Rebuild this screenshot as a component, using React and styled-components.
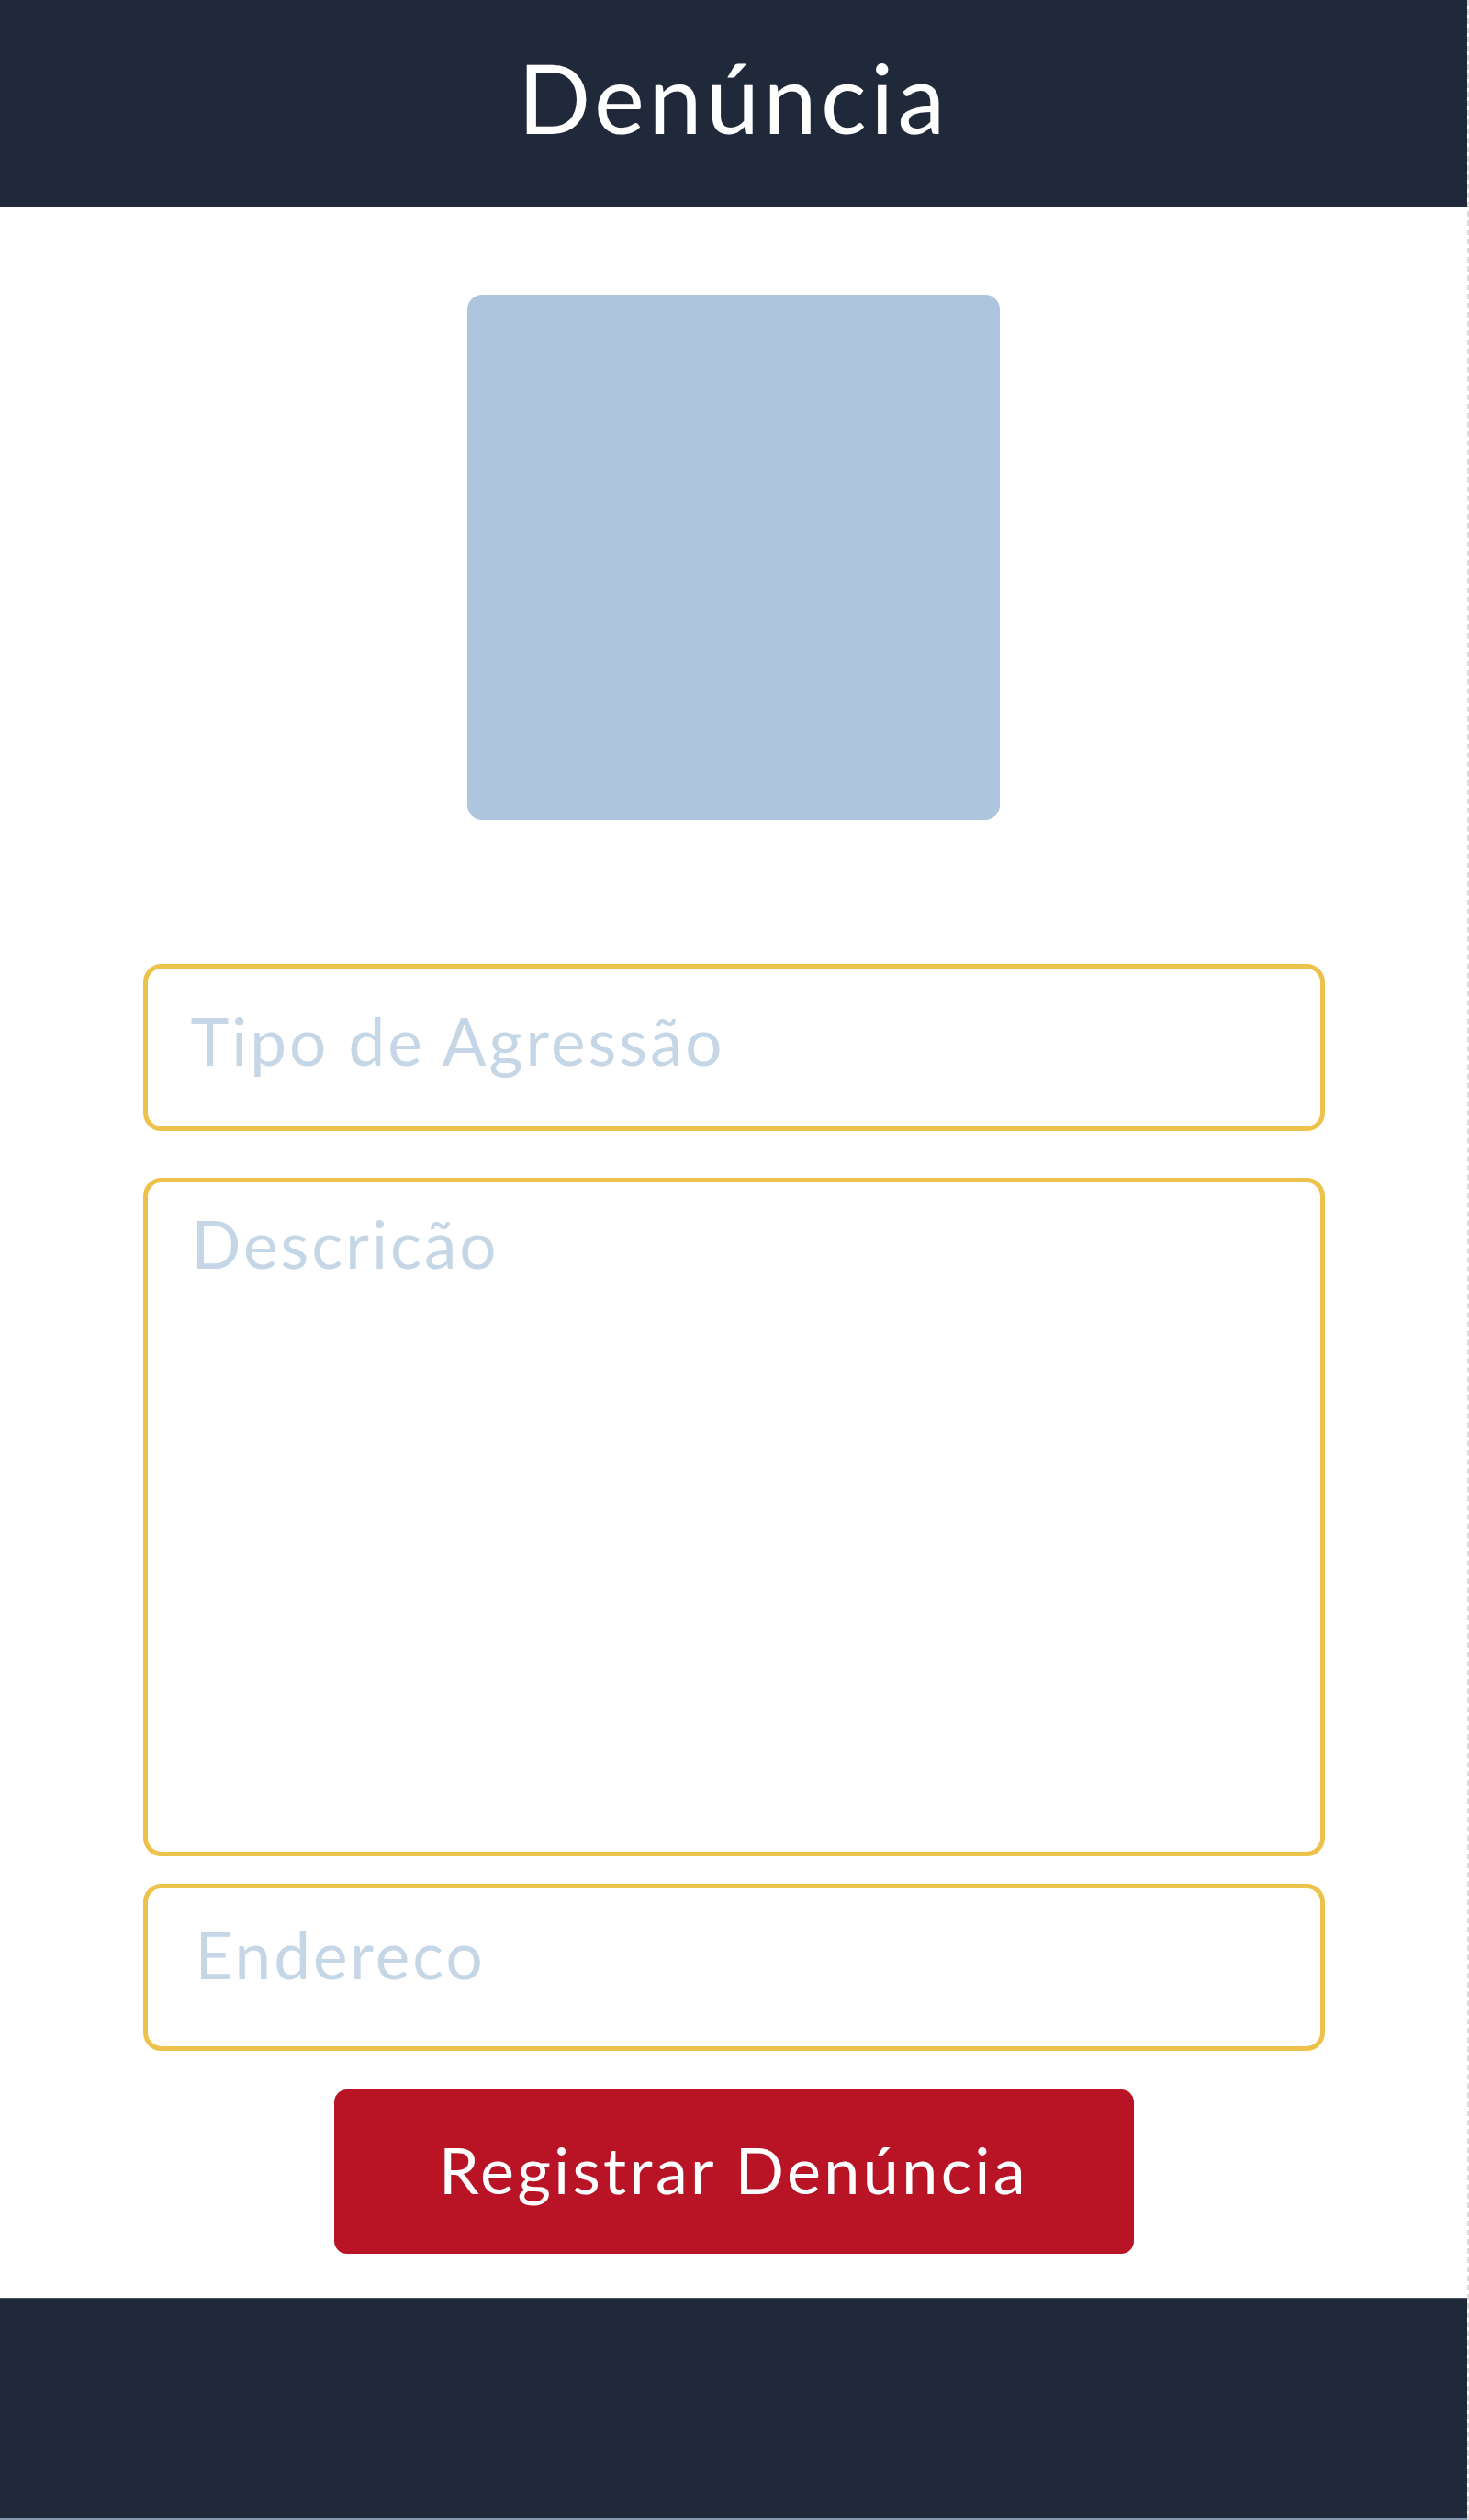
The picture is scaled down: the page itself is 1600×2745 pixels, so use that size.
import React from "react";
import styled, { createGlobalStyle } from "styled-components";

const Global = createGlobalStyle`
  html, body { margin: 0; padding: 0; background: #ffffff; }
  body { font-family: "Lato", "Open Sans", sans-serif; }
  * { box-sizing: border-box; }
`;

const Frame = styled.div`
  width: 1600px;
  min-height: 2745px;
  display: flex;
  flex-direction: column;
  border-right: 2px dashed #dcdcdc;
`;

const Header = styled.header`
  height: 226px;
  background: #202939;
  border-bottom: 1px solid #4b5361;
  display: flex;
  align-items: center;
  justify-content: center;
`;

const Title = styled.h1`
  margin: 0;
  margin-top: -14px;
  color: #ffffff;
  font-family: "Lato", sans-serif;
  font-weight: 400;
  font-size: 104px;
  letter-spacing: 4.5px;
  line-height: 1;
`;

const Main = styled.main`
  flex: 1;
  display: flex;
  flex-direction: column;
  align-items: center;
  padding-top: 95px;
  padding-bottom: 48px;
`;

const Photo = styled.div`
  width: 580px;
  height: 572px;
  background: #adc6dd;
  border-radius: 16px;
  margin-bottom: 157px;
`;

const Form = styled.form`
  display: flex;
  flex-direction: column;
  align-items: center;
  width: 1287px;
`;

const fieldBase = `
  width: 100%;
  border: 5px solid #ecc24a;
  border-radius: 20px;
  background: #ffffff;
  font-family: "Lato", sans-serif;
  font-weight: 400;
  font-size: 71px;
  letter-spacing: 3px;
  color: #33415a;
  outline: none;
  &::placeholder { color: #c5d6e6; opacity: 1; }
`;

const TextField = styled.input`
  ${fieldBase}
  height: 182px;
  padding: 0 0 ${(p) => p.$lift}px ${(p) => p.$indent}px;
  margin-bottom: ${(p) => p.$gap}px;
`;

const TextArea = styled.textarea`
  ${fieldBase}
  height: 739px;
  resize: none;
  padding: 24px 0 0 48px;
  line-height: 1.2;
  margin-bottom: 30px;
`;

const SubmitButton = styled.button`
  width: 871px;
  height: 179px;
  border: none;
  border-radius: 14px;
  background: #b91426;
  color: #ffffff;
  font-family: "Lato", sans-serif;
  font-weight: 400;
  font-size: 70px;
  letter-spacing: 3.4px;
  padding-bottom: 6px;
  cursor: pointer;
`;

const Footer = styled.footer`
  height: 242px;
  background: #202939;
  border-top: 1px solid #4b5361;
  border-bottom: 2px solid #8797ad;
`;

export default function App() {
  return (
    <>
      <Global />
      <Frame>
        <Header>
          <Title>Denúncia</Title>
        </Header>
        <Main>
          <Photo />
          <Form onSubmit={(e) => e.preventDefault()}>
            <TextField placeholder="Tipo de Agressão" $indent={47} $lift={16} $gap={51} />
            <TextArea placeholder="Descricão" />
            <TextField placeholder="Endereco" $indent={52} $lift={30} $gap={42} />
            <SubmitButton type="submit">Registrar Denúncia</SubmitButton>
          </Form>
        </Main>
        <Footer />
      </Frame>
    </>
  );
}
